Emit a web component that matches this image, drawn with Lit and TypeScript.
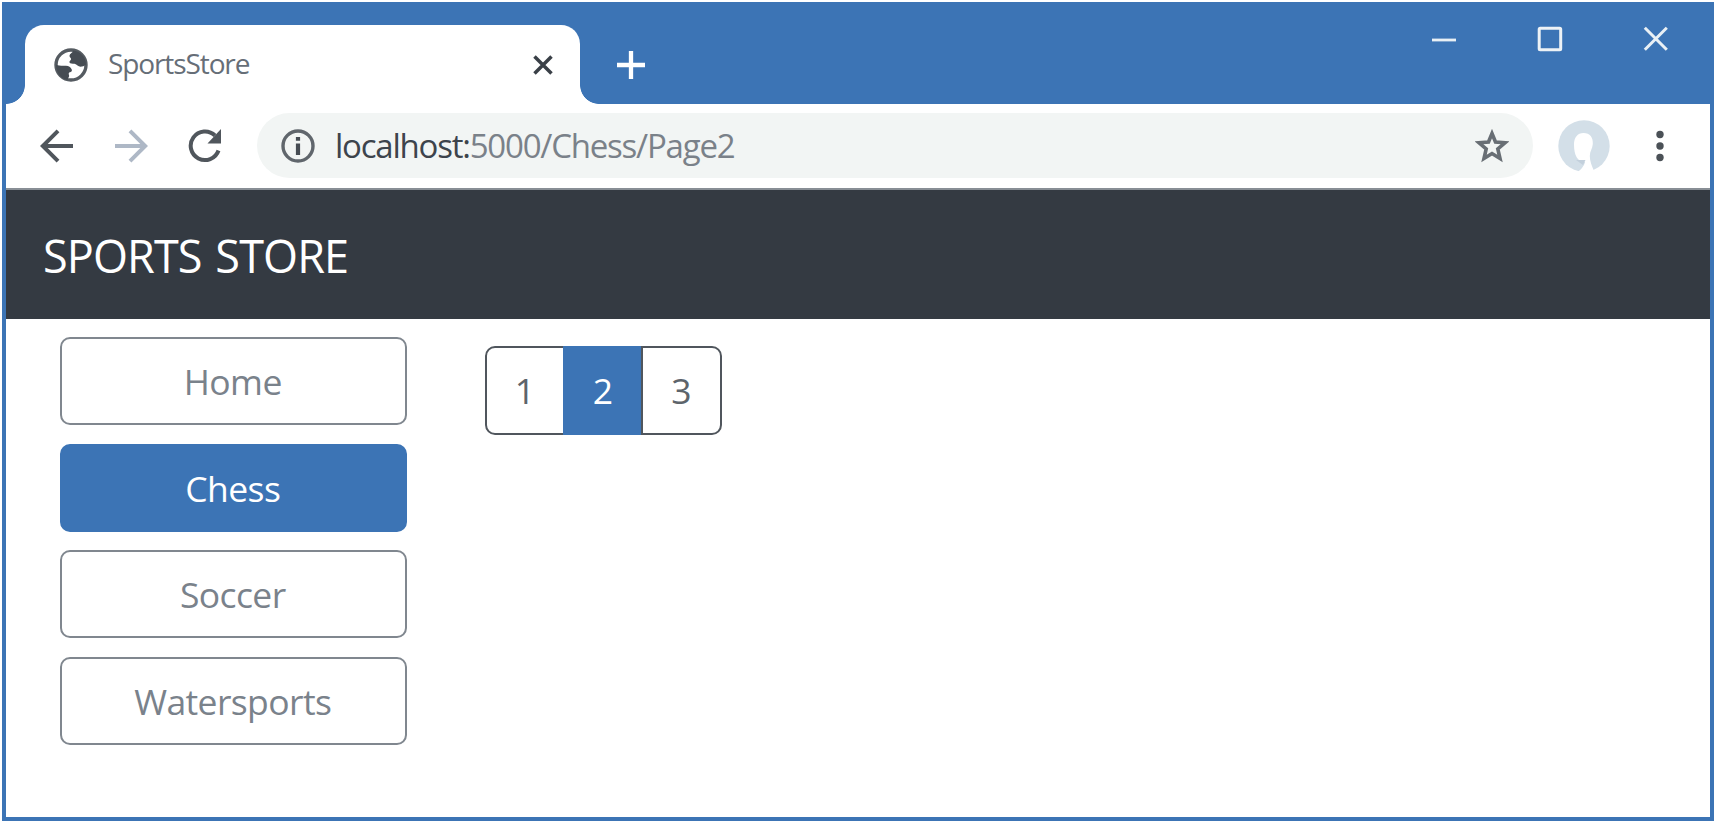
import { LitElement, html, css, svg } from "lit";
import { customElement, property, state } from "lit/decorators.js";
import { classMap } from "lit/directives/class-map.js";

const icons = {
  globe: svg`<svg width="34" height="34" viewBox="0 0 34 34"><circle cx="17" cy="17" r="15" fill="#fff" stroke="#555b61" stroke-width="3.400"/><path d="M19 2.500c.5 2-3.500 3-3.500 5.500 0 1.500 2 2 1.500 3.500-.5 1.200-2 1.500-1.500 3 .5 1.300 3 1 5 1.300 2.500.4 3.500 3 6 3 2 0 3.500-.8 5.500-2C32 9 26 3 19 2.500zM2 16.500c2 1.500 4.500 1 7 1.200h3c3 0 4.500 1.300 5.500 3.300.8 1.500.5 3-1.500 3.300-1.500.2-1.500 1.700-1 2.700.7 1.500-1 3-1.500 5C7 30.500 2 25 2 16.500z" fill="#464c53"/></svg>`,
  tabClose: svg`<svg width="20" height="20" viewBox="0 0 20 20"><path d="M1.500 1.500l17 17M18.500 1.500l-17 17" stroke="#3a4047" stroke-width="3.500"/></svg>`,
  plus: svg`<svg width="28" height="28" viewBox="0 0 28 28"><path d="M14 .5v27M.5 14h27" stroke="#fff" stroke-width="4.300" stroke-linecap="square"/></svg>`,
  minimize: svg`<svg width="24" height="26" viewBox="0 0 24 26"><path d="M0 14h24" stroke="#e9f0f5" stroke-width="2.800"/></svg>`,
  maximize: svg`<svg width="26" height="26" viewBox="0 0 26 26"><rect x="2.200" y="2.200" width="21.500" height="21.500" rx="1" fill="none" stroke="#edf2f6" stroke-width="3"/></svg>`,
  close: svg`<svg width="26" height="26" viewBox="0 0 26 26"><path d="M1.800 1.800l22 22M23.800 1.800l-22 22" stroke="#e9f0f5" stroke-width="3"/></svg>`,
  back: svg`<svg width="34" height="34" viewBox="0 0 34 34"><path d="M33 17H3M18 1.800L2.800 17 18 32.200" fill="none" stroke="#50565c" stroke-width="4"/></svg>`,
  forward: svg`<svg width="34" height="34" viewBox="0 0 34 34"><path d="M1 17h30M16 1.800L31.200 17 16 32.200" fill="none" stroke="#aeb8c6" stroke-width="4"/></svg>`,
  reload: svg`<svg width="34" height="34" viewBox="0 0 34 34"><path d="M30.500 21.500A14.300 14.300 0 1 1 27 6.500" fill="none" stroke="#50565c" stroke-width="4"/><path d="M33 0v14.500H19.500z" fill="#50565c"/></svg>`,
  info: svg`<svg width="34" height="34" viewBox="0 0 34 34"><circle cx="17" cy="17" r="15" fill="none" stroke="#60666c" stroke-width="3.400"/><path d="M17 8v3.800M17 14.500v11.500" stroke="#464c53" stroke-width="4.200"/></svg>`,
  star: svg`<svg width="34" height="34" viewBox="0 0 34 34"><path d="M17 4.500l3.500 8.500 9.500.8-7.200 6.200 2.200 9.500L17 24.500l-8 5 2.200-9.500L4 13.800l9.500-.8z" fill="none" stroke="#686e74" stroke-width="3.600"/></svg>`,
  avatar: svg`<svg width="52" height="52" viewBox="0 0 52 52"><circle cx="26" cy="26" r="25.700" fill="#d3dfe8"/><path d="M25.500 13c6.500 0 9.800 4.500 9.300 11-.3 4.500-3 7.500-3 12 0 5 2 10 4 14.500l-2 1.500H19.500c3-2 6.500-5.500 7.500-10-7.500 0-11-7-11-17.500C16 17.500 19.500 13 25.500 13z" fill="#fff"/><path d="M18 40h9.500L25 45z" fill="#c3d0dc"/></svg>`,
  menu: svg`<svg width="8" height="34" viewBox="0 0 8 34"><g fill="#4b5157"><circle cx="4" cy="5.500" r="3.700"/><circle cx="4" cy="17" r="3.700"/><circle cx="4" cy="28.500" r="3.700"/></g></svg>`,
};

@customElement("browser-chrome")
class BrowserChrome extends LitElement {
  @property() tabTitle = "";
  @property() host = "";
  @property() path = "";

  static styles = css`
    :host { display: block; }
    svg { display: block; flex: none; }
    .strip { display: flex; height: 102px; background: #3c74b5; align-items: flex-end; }
    .flare { width: 19px; height: 19px; flex: none; }
    .flare.left { background: radial-gradient(circle at 0 0, #3c74b5 18.500px, #fff 19.200px); }
    .flare.right { background: radial-gradient(circle at 100% 0, #3c74b5 18.500px, #fff 19.200px); }
    .tab { box-sizing: border-box; width: 555px; height: 79px; padding: 0 27px 0 29px; background: #fff;
      border-radius: 19px 19px 0 0; display: flex; align-items: center; }
    .title { flex: 1; margin-left: 20px; font-size: 28px; letter-spacing: -1.100px; color: #666e77; line-height: 36px; padding-bottom: 3px; }
    .new { height: 53px; margin-left: 18px; }
    .controls { align-self: flex-start; display: flex; gap: 80.500px; margin: 24px 41px 0 auto; }
    .bar { display: flex; align-items: center; box-sizing: border-box; height: 86px; background: #fff;
      border-bottom: 2px solid #888e95; padding-left: 34px; }
    .nav { display: flex; gap: 40px; width: 217px; }
    .omni { box-sizing: border-box; width: 1276px; height: 65px; border-radius: 33px; background: #f2f5f4;
      display: flex; align-items: center; padding: 1px 24px 0; margin-bottom: 2px; }
    .url { flex: 1; margin-left: 20px; font-size: 33px; line-height: 48px; letter-spacing: -1.220px; color: #7a8189; white-space: nowrap; }
    .domain { color: #3d444c; }
    .avatar { margin-left: 25px; }
    .menu { margin-left: 46px; }
  `;

  render() {
    return html`
      <div class="strip">
        <div class="flare left"></div>
        <div class="tab">${icons.globe}<span class="title">${this.tabTitle}</span>${icons.tabClose}</div>
        <div class="flare right"></div>
        <div class="new">${icons.plus}</div>
        <div class="controls">${icons.minimize}${icons.maximize}${icons.close}</div>
      </div>
      <div class="bar">
        <div class="nav">${icons.back}${icons.forward}${icons.reload}</div>
        <div class="omni">
          ${icons.info}
          <span class="url"><span class="domain">${this.host}</span>${this.path}</span>
          ${icons.star}
        </div>
        <div class="avatar">${icons.avatar}</div>
        <div class="menu">${icons.menu}</div>
      </div>
    `;
  }
}

@customElement("store-page")
class StorePage extends LitElement {
  @state() private category = "Chess";
  @state() private page = 2;

  static styles = css`
    :host { display: block; }
    button { font: inherit; letter-spacing: inherit; box-sizing: border-box; cursor: pointer; margin: 0; }
    .navbar { height: 129px; box-sizing: border-box; background: #343a42; color: #fff; padding: 0 37px;
      font-size: 45px; line-height: 132px; letter-spacing: -0.900px; word-spacing: 3px; overflow: hidden; }
    .content { display: flex; align-items: flex-start; gap: 78px; padding: 18px 54px 18px 53.500px; }
    .categories { display: flex; flex-direction: column; gap: 18.500px; width: 347.500px; }
    .category { height: 88px; border: 2px solid #80878f; border-radius: 10px; background: #fff; color: #7a828b;
      font-size: 35.500px; line-height: 84px; padding: 0 1px 1px 0; letter-spacing: -0.600px; }
    .category.active { background: #3c74b5; border-color: #3c74b5; color: #fff; }
    .pager { display: flex; margin-top: 9px; }
    .page { width: 80px; height: 89px; border: 2.500px solid #50565d; background: #fff; color: #5d646b;
      font-size: 35.500px; line-height: 82px; padding: 0 0 1px; margin-left: -2px; }
    .page:first-child { border-radius: 10px 0 0 10px; margin-left: 0; }
    .page:last-child { border-radius: 0 10px 10px 0; width: 81px; }
    .page.active { background: #3c74b5; border-color: #3c74b5; color: #fff; }
  `;

  render() {
    return html`
      <div class="navbar">SPORTS STORE</div>
      <div class="content">
        <div class="categories">
          ${["Home", "Chess", "Soccer", "Watersports"].map(
            (name) => html`<button class=${classMap({ category: true, active: name === this.category })}
              @click=${() => (this.category = name)}>${name}</button>`
          )}
        </div>
        <div class="pager">
          ${[1, 2, 3].map(
            (n) => html`<button class=${classMap({ page: true, active: n === this.page })}
              @click=${() => (this.page = n)}>${n}</button>`
          )}
        </div>
      </div>
    `;
  }
}

@customElement("app-root")
class AppRoot extends LitElement {
  static styles = css`
    :host { display: block; box-sizing: border-box; height: 823px; padding: 2px; background: #fff;
      font-family: "Open Sans", "Noto Sans", sans-serif; }
    .window { box-sizing: border-box; height: 819px; border: solid #3c74b5; border-width: 0 4px 4px; background: #fff; overflow: hidden; }
  `;

  render() {
    return html`
      <div class="window">
        <browser-chrome tabTitle="SportsStore" host="localhost:" path="5000/Chess/Page2"></browser-chrome>
        <store-page></store-page>
      </div>
    `;
  }
}
